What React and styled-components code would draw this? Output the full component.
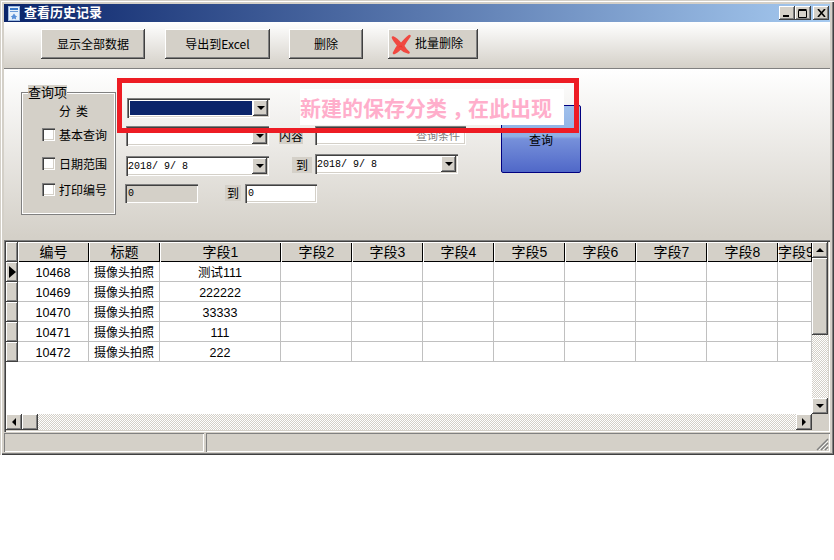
import React from "react";
import styled, { createGlobalStyle } from "styled-components";

const GlobalStyle = createGlobalStyle`
  html, body { margin: 0; padding: 0; background: #fff; }
  body {
    font-family: "Noto Sans CJK SC", "Liberation Sans", sans-serif;
    font-size: 12px;
    color: #000;
  }
`;

const raised = `box-shadow: inset -1px -1px #404040, inset 1px 1px #fff, inset -2px -2px #808080, inset 2px 2px #d4d0c8;`;
const sunken = `box-shadow: inset 1px 1px #808080, inset 2px 2px #404040, inset -1px -1px #fff, inset -2px -2px #d4d0c8;`;
const dither = `background: repeating-conic-gradient(#d4d0c8 0 25%, #fff 0 50%) 0 0 / 2px 2px;`;

const columns = [
  { key: "id", title: "编号", width: 71 },
  { key: "name", title: "标题", width: 71 },
  { key: "f1", title: "字段1", width: 121 },
  { key: "f2", title: "字段2", width: 71 },
  { key: "f3", title: "字段3", width: 71 },
  { key: "f4", title: "字段4", width: 71 },
  { key: "f5", title: "字段5", width: 71 },
  { key: "f6", title: "字段6", width: 71 },
  { key: "f7", title: "字段7", width: 71 },
  { key: "f8", title: "字段8", width: 71 },
  { key: "f9", title: "字段9", width: 34 },
];

const rows = [
  { id: "10468", name: "摄像头拍照", f1: "测试111" },
  { id: "10469", name: "摄像头拍照", f1: "222222" },
  { id: "10470", name: "摄像头拍照", f1: "33333" },
  { id: "10471", name: "摄像头拍照", f1: "111" },
  { id: "10472", name: "摄像头拍照", f1: "222" },
];

const Window = styled.div`
  width: 834px;
  height: 455px;
  box-sizing: border-box;
  padding: 4px 4px 2px;
  background: #d4d0c8;
  box-shadow: inset 1px 1px #d4d0c8, inset 2px 2px #fff, inset -1px -1px #404040, inset -2px -2px #808080;
  display: flex;
  flex-direction: column;
`;

const TitleBar = styled.div`
  height: 18px;
  flex: none;
  display: flex;
  align-items: center;
  padding: 0 1px 0 4px;
  background: linear-gradient(90deg, #0a246a, #a6caf0);
`;

const TitleText = styled.span`
  color: #fff;
  font-weight: 700;
  font-size: 13px;
  line-height: 16px;
  margin: -2px 0 0 4px;
  flex: 1;
`;

const CaptionButton = styled.div`
  width: 16px;
  height: 14px;
  margin-left: ${(p) => p.$gap || 0}px;
  background: #d4d0c8;
  ${raised}
  display: flex;
  align-items: center;
  justify-content: center;
`;

const Toolbar = styled.div`
  height: 47px;
  flex: none;
  box-sizing: border-box;
  padding: 7px 0 0 37px;
  display: flex;
  align-items: flex-start;
  gap: 20px;
  background: linear-gradient(180deg, #fff, #d4d0c8);
  border-bottom: 1px solid #808080;
`;

const ToolButton = styled.button`
  width: ${(p) => p.$w}px;
  height: 30px;
  margin-left: ${(p) => p.$gap || 0}px;
  padding: ${(p) => (p.$icon ? "0 0 0 2px" : "0 0 2px")};
  border: none;
  border-radius: 0;
  background: #d4d0c8;
  ${raised}
  font-family: inherit;
  font-size: 12px;
  color: #000;
  display: flex;
  align-items: center;
  justify-content: ${(p) => (p.$icon ? "flex-start" : "center")};
  gap: 3px;
`;

const ToolLabel = styled.span`
  margin-top: -3px;
`;

const QueryPanel = styled.div`
  height: 168px;
  flex: none;
  position: relative;
  box-sizing: border-box;
  padding: 16px 0 0 17px;
  display: flex;
  align-items: flex-start;
  background: linear-gradient(180deg, #fff, #d4d0c8);
`;

const GroupBox = styled.fieldset`
  width: 95px;
  height: 130px;
  margin: 0;
  padding: 0;
  box-sizing: border-box;
  border: 1px solid #808080;
  box-shadow: 0 0 0 1px #fff inset;
  background: #d4d0c8;
  display: flex;
  flex-direction: column;
`;

const GroupLegend = styled.legend`
  font-size: 13px;
  line-height: 14px;
  padding: 0;
  margin-left: 6px;
  background: #d4d0c8;
`;

const ClassLabel = styled.div`
  text-align: center;
  letter-spacing: 5px;
  line-height: 16px;
  margin: 4px 0 4px 15px;
`;

const CheckRow = styled.label`
  display: flex;
  align-items: center;
  height: 14px;
  gap: 4px;
  margin: ${(p) => p.$top}px 0 0 20px;
  white-space: nowrap;
`;

const CheckBoxMark = styled.span`
  width: 13px;
  height: 13px;
  flex: none;
  background: #fff;
  ${sunken}
`;

const FormArea = styled.div`
  width: 376px;
  margin: 13px 0 0 9px;
  flex: none;
  display: flex;
  flex-direction: column;
`;

const FormRow = styled.div`
  display: flex;
  align-items: flex-start;
  height: ${(p) => p.$h}px;
  margin-left: ${(p) => p.$left || 0}px;
`;

const Combo = styled.div`
  width: 143px;
  height: 20px;
  margin-top: ${(p) => p.$top || 0}px;
  box-sizing: border-box;
  flex: none;
  background: #fff;
  ${sunken}
  padding: 2px;
  display: flex;
  align-items: center;
`;

const ComboValue = styled.div`
  flex: 1;
  align-self: stretch;
  margin: ${(p) => (p.$selected ? "1px" : "0")};
  background: ${(p) => (p.$selected ? "#0a246a" : "transparent")};
  font-family: "Liberation Mono", monospace;
  font-size: 10px;
  line-height: 17px;
  white-space: pre;
`;

const ComboArrow = styled.div`
  width: 15px;
  align-self: stretch;
  background: #d4d0c8;
  ${raised}
  display: flex;
  align-items: center;
  justify-content: center;
`;

const Arrow = styled.span`
  width: 0;
  height: 0;
  border-style: solid;
  border-color: transparent;
  ${(p) => p.$dir === "down" && `border-width: 4px 4px 0; border-top-color: #000;`}
  ${(p) => p.$dir === "up" && `border-width: 0 4px 4px; border-bottom-color: #000;`}
  ${(p) => p.$dir === "left" && `border-width: 4px 4px 4px 0; border-right-color: #000;`}
  ${(p) => p.$dir === "right" && `border-width: 4px 0 4px 4px; border-left-color: #000;`}
`;

const RowMarker = styled.span`
  width: 0;
  height: 0;
  border-style: solid;
  border-color: transparent;
  border-width: 6px 0 6px 7px;
  border-left-color: #000;
`;

const FieldLabel = styled.span`
  flex: none;
  width: ${(p) => p.$w}px;
  margin: ${(p) => p.$top}px ${(p) => p.$right || 0}px 0 ${(p) => p.$left}px;
  text-align: center;
  line-height: 16px;
  background: #d4d0c8;
`;

const TextInput = styled.div`
  width: ${(p) => p.$w}px;
  height: 19px;
  flex: none;
  box-sizing: border-box;
  background: ${(p) => p.$bg || "#fff"};
  ${sunken}
  padding: 3px;
  font-family: "Liberation Mono", monospace;
  font-size: 10px;
  line-height: 13px;
`;

const HintInput = styled(TextInput)`
  font-family: inherit;
  font-size: 11px;
  color: #808080;
  text-align: right;
  padding-right: 6px;
`;

const QueryButton = styled.button`
  width: 80px;
  height: 68px;
  margin-top: 20px;
  flex: none;
  padding: 0;
  border: 1px solid #000080;
  border-radius: 2px;
  background: linear-gradient(180deg, #9fc0ec 0%, #8eb0e4 46%, #7690da 50%, #5068c8 100%);
  font-family: inherit;
  font-size: 12px;
  color: #000;
`;

const RedFrame = styled.div`
  position: absolute;
  left: 113px;
  top: 9px;
  width: 462px;
  height: 55px;
  box-sizing: border-box;
  border: 5px solid #ed1c24;
  pointer-events: none;
`;

const Callout = styled.div`
  position: absolute;
  left: 296px;
  top: 20px;
  width: 264px;
  height: 36px;
  background: #fff;
  color: #ffaecb;
  font-weight: 700;
  font-size: 21px;
  line-height: 36px;
  white-space: nowrap;
`;

const CalloutComma = styled.span`
  position: relative;
  left: 5px;
`;

const GridFrame = styled.div`
  margin-top: 3px;
  height: 192px;
  width: 826px;
  flex: none;
  box-sizing: border-box;
  padding: 2px;
  background: #fff;
  ${sunken}
  display: grid;
  grid-template-columns: 806px 16px;
  grid-template-rows: 172px 16px;
`;

const DataArea = styled.div`
  overflow: hidden;
  background: #fff;
  display: flex;
  flex-direction: column;
`;

const GridRow = styled.div`
  height: 20px;
  flex: none;
  display: flex;
`;

const Indicator = styled.div`
  width: 12px;
  flex: none;
  box-sizing: border-box;
  background: #d4d0c8;
  ${raised}
  display: flex;
  align-items: center;
  justify-content: center;
`;

const HeadCell = styled.div`
  width: ${(p) => p.$w}px;
  flex: none;
  box-sizing: border-box;
  padding-top: 1px;
  background: #d4d0c8;
  box-shadow: inset 1px 1px #fff, inset -1px -1px #000;
  font-size: 14px;
  line-height: 19px;
  text-align: center;
  white-space: nowrap;
  overflow: hidden;
  font-family: "Liberation Sans", "Noto Sans CJK SC", sans-serif;
`;

const Cell = styled.div`
  width: ${(p) => p.$w}px;
  flex: none;
  box-sizing: border-box;
  padding-top: 3px;
  border-right: 1px solid #c0c0c0;
  border-bottom: 1px solid #c0c0c0;
  font-family: "Liberation Sans", "Noto Sans CJK SC", sans-serif;
  font-size: 12.5px;
  line-height: 16px;
  text-align: center;
  white-space: nowrap;
  overflow: hidden;
`;

const CellCjk = styled.span`
  font-size: 12px;
`;

const VScroll = styled.div`
  ${dither}
  display: flex;
  flex-direction: column;
  justify-content: space-between;
`;

const HScroll = styled.div`
  ${dither}
  display: flex;
  justify-content: space-between;
`;

const ScrollGroup = styled.div`
  display: flex;
  flex-direction: ${(p) => (p.$column ? "column" : "row")};
`;

const ScrollButton = styled.div`
  width: 16px;
  height: 16px;
  flex: none;
  background: #d4d0c8;
  ${raised}
  display: flex;
  align-items: center;
  justify-content: center;
`;

const VThumb = styled.div`
  width: 16px;
  height: 77px;
  background: #d4d0c8;
  ${raised}
`;

const Corner = styled.div`
  background: #d4d0c8;
`;

const StatusBar = styled.div`
  margin-top: 1px;
  height: 19px;
  flex: none;
  display: flex;
  gap: 2px;
`;

const StatusPanel = styled.div`
  width: ${(p) => p.$w}px;
  flex: ${(p) => (p.$grow ? 1 : "none")};
  position: relative;
  box-sizing: border-box;
  background: #d4d0c8;
  box-shadow: inset 1px 1px #808080, inset -1px -1px #fff;
`;

const Grip = styled.svg`
  position: absolute;
  right: 1px;
  bottom: 1px;
`;

const AppIcon = () => (
  <svg width="12" height="15" viewBox="0 0 12 15">
    <rect x="0.5" y="0.5" width="11" height="14" fill="#e8f0fa" stroke="#9ab8e0" />
    <rect x="2" y="2" width="8" height="2" fill="#3a78c8" />
    <rect x="2" y="5" width="8" height="1" fill="#6a9ad8" />
    <path d="M6 7.5l1.6 2.3 1.6.8-1.4 1 .4 2-2.2-1-2.2 1 .4-2-1.4-1 1.6-.8z" fill="#5a90d8" />
  </svg>
);

const DeleteIcon = () => (
  <svg width="22" height="21" viewBox="0 0 22 21">
    <defs>
      <linearGradient id="xRed" x1="0" y1="0" x2="1" y2="1">
        <stop offset="0" stopColor="#ff8a7a" />
        <stop offset="0.5" stopColor="#f03428" />
        <stop offset="1" stopColor="#e81818" />
      </linearGradient>
    </defs>
    <path d="M3 3.5C6 4.5 9 8 11 10.5 13.5 7.5 16 4.5 19.5 2 16.5 6 14.5 9 13 12 14.5 14.5 16.5 17 18.5 18.5 15 18 12.5 16 10.5 14 8.5 16 6.5 18 4 19 5.5 16 7 13.5 8.5 11.5 6.5 9 4 6 3 3.5Z" fill="url(#xRed)" stroke="#f04840" strokeWidth="2.6" strokeLinejoin="round" />
  </svg>
);

const ComboBox = ({ value = "", selected, ...rest }) => (
  <Combo {...rest}>
    <ComboValue $selected={selected}>{value}</ComboValue>
    <ComboArrow><Arrow $dir="down" /></ComboArrow>
  </Combo>
);

export default function App() {
  return (
    <>
      <GlobalStyle />
      <Window>
        <TitleBar>
          <AppIcon />
          <TitleText>查看历史记录</TitleText>
          <CaptionButton>
            <svg width="8" height="8" viewBox="0 0 8 8"><rect x="0" y="6" width="6" height="2" fill="#000" /></svg>
          </CaptionButton>
          <CaptionButton>
            <svg width="10" height="9" viewBox="0 0 10 9"><path d="M.5 1.5h8v7h-8zM.5.5h8" fill="none" stroke="#000" /></svg>
          </CaptionButton>
          <CaptionButton $gap={2}>
            <svg width="9" height="8" viewBox="0 0 9 8"><path d="M1 0l7 8M8 0L1 8" stroke="#000" strokeWidth="1.6" /></svg>
          </CaptionButton>
        </TitleBar>

        <Toolbar>
          <ToolButton $w={104}>显示全部数据</ToolButton>
          <ToolButton $w={105}>导出到Excel</ToolButton>
          <ToolButton $w={74} $gap={-1}>删除</ToolButton>
          <ToolButton $w={90} $gap={5} $icon><DeleteIcon /><ToolLabel>批量删除</ToolLabel></ToolButton>
        </Toolbar>

        <QueryPanel>
          <GroupBox>
            <GroupLegend>查询项</GroupLegend>
            <ClassLabel>分类</ClassLabel>
            <CheckRow $top={4}><CheckBoxMark />基本查询</CheckRow>
            <CheckRow $top={15}><CheckBoxMark />日期范围</CheckRow>
            <CheckRow $top={12}><CheckBoxMark />打印编号</CheckRow>
          </GroupBox>

          <FormArea>
            <FormRow $h={28} $left={2}><ComboBox selected /></FormRow>
            <FormRow $h={28} $left={1}>
              <ComboBox />
              <FieldLabel $w={24} $left={10} $right={12} $top={2}>内容</FieldLabel>
              <HintInput $w={151}>查询条件</HintInput>
            </FormRow>
            <FormRow $h={30} $left={1}>
              <ComboBox value="2018/ 9/ 8" $top={2} />
              <FieldLabel $w={20} $left={23} $right={3} $top={3}>到</FieldLabel>
              <ComboBox value="2018/ 9/ 8" />
            </FormRow>
            <FormRow $h={19}>
              <TextInput $w={73} $bg="#d4d0c8">0</TextInput>
              <FieldLabel $w={16} $left={27} $right={4} $top={1}>到</FieldLabel>
              <TextInput $w={72}>0</TextInput>
            </FormRow>
          </FormArea>

          <QueryButton>查询</QueryButton>

          <RedFrame />
          <Callout>新建的保存分类<CalloutComma>，</CalloutComma>在此出现</Callout>
        </QueryPanel>

        <GridFrame>
          <DataArea>
            <GridRow>
              <Indicator />
              {columns.map((c) => (
                <HeadCell key={c.key} $w={c.width}>{c.title}</HeadCell>
              ))}
            </GridRow>
            {rows.map((r, i) => (
              <GridRow key={r.id}>
                <Indicator>{i === 0 && <RowMarker />}</Indicator>
                {columns.map((c) => (
                  <Cell key={c.key} $w={c.width}>
                    {c.key === "name" ? <CellCjk>{r[c.key]}</CellCjk> : r[c.key]}
                  </Cell>
                ))}
              </GridRow>
            ))}
          </DataArea>
          <VScroll>
            <ScrollGroup $column>
              <ScrollButton><Arrow $dir="up" /></ScrollButton>
              <VThumb />
            </ScrollGroup>
            <ScrollButton><Arrow $dir="down" /></ScrollButton>
          </VScroll>
          <HScroll>
            <ScrollGroup>
              <ScrollButton><Arrow $dir="left" /></ScrollButton>
              <ScrollButton />
            </ScrollGroup>
            <ScrollButton><Arrow $dir="right" /></ScrollButton>
          </HScroll>
          <Corner />
        </GridFrame>

        <StatusBar>
          <StatusPanel $w={200} />
          <StatusPanel $grow>
            <Grip width="13" height="13" viewBox="0 0 13 13">
              <path d="M12 1L1 12M12 5L5 12M12 9L9 12" stroke="#808080" strokeWidth="1.4" />
              <path d="M12 3L3 12M12 7L7 12M12 11L11 12" stroke="#fff" strokeWidth="0.8" />
            </Grip>
          </StatusPanel>
        </StatusBar>
      </Window>
    </>
  );
}
